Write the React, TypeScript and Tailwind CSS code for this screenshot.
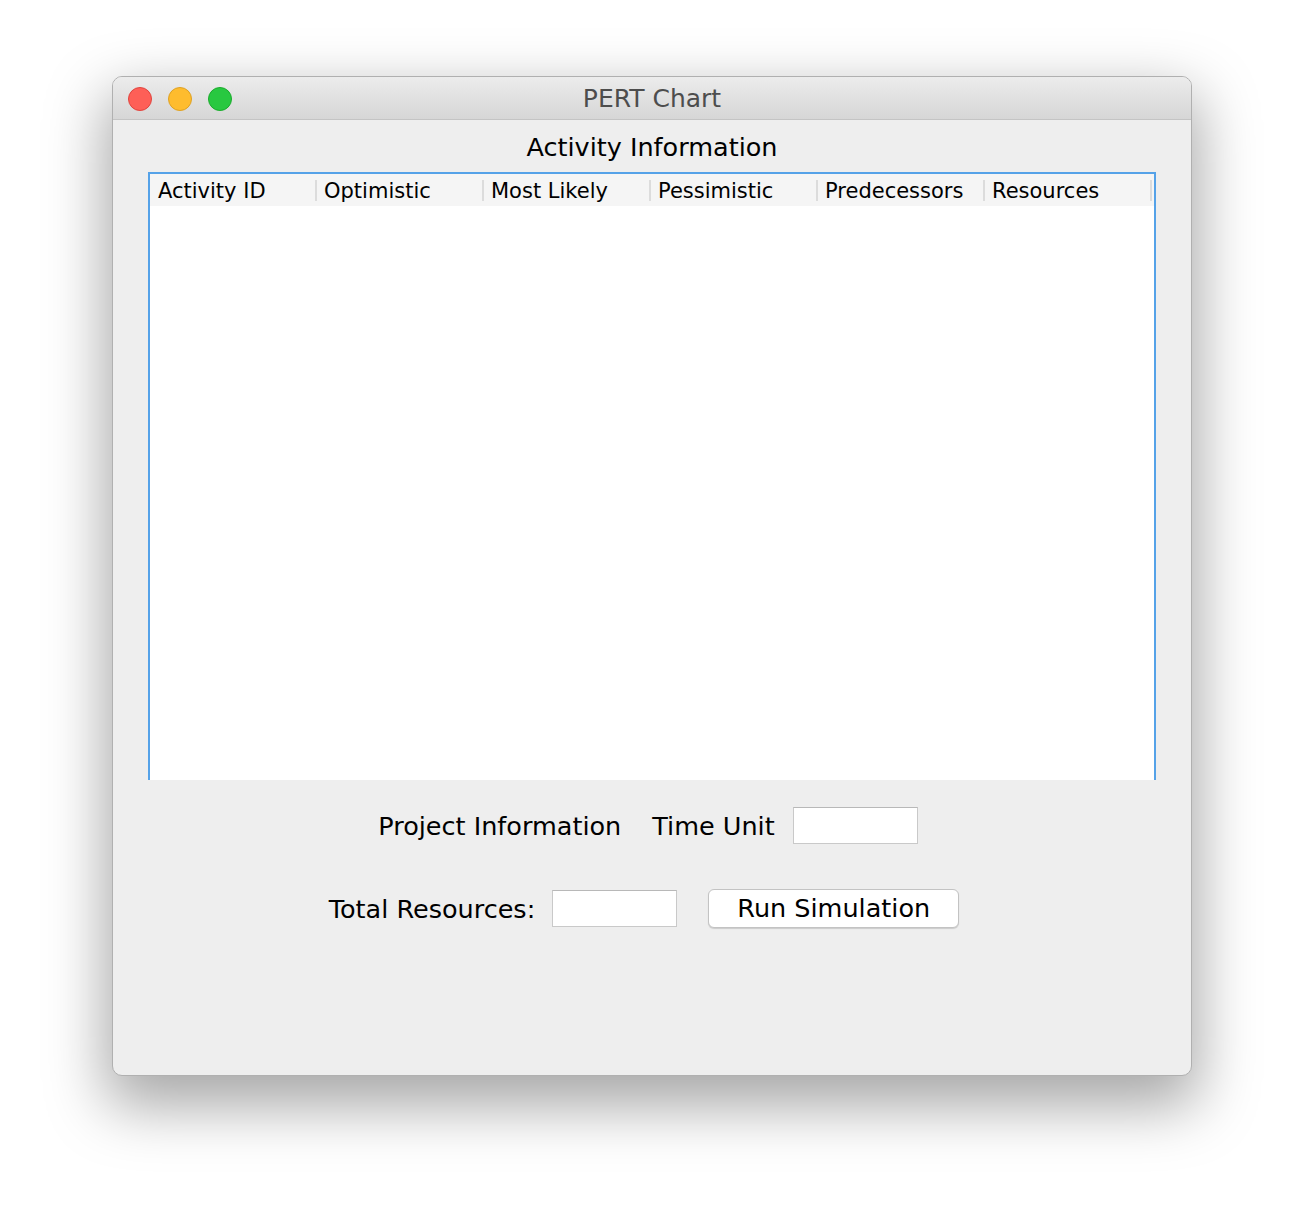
const columns = ['Activity ID', 'Optimistic', 'Most Likely', 'Pessimistic', 'Predecessors', 'Resources'];

const TrafficLights = () => (
  <div className="absolute left-[15px] top-[10px] flex gap-[16px]">
    <span className="h-[24px] w-[24px] rounded-full border border-[#e0443e] bg-[#fe5f57]" />
    <span className="h-[24px] w-[24px] rounded-full border border-[#dea123] bg-[#febc2e]" />
    <span className="h-[24px] w-[24px] rounded-full border border-[#1aac2c] bg-[#28c840]" />
  </div>
);

const Field = () => <div className="h-[37px] w-[125px] border border-[#c9c9c9] border-t-[#b8b8b8] bg-white" />;

const App = () => {
  return (
    <div className="min-h-[1224px] bg-white pt-[76px] font-['DejaVu_Sans',sans-serif]">
      <div className="mx-auto h-[1000px] w-[1080px] overflow-hidden rounded-[10px] border border-[#b0b0b0] bg-[#eeeeee] shadow-[0_24px_60px_6px_rgba(0,0,0,0.35)]">
        <div className="relative flex h-[43px] items-center justify-center border-b border-[#c4c4c4] bg-gradient-to-b from-[#ececec] to-[#d6d6d6]">
          <TrafficLights />
          <span className="text-[25px] leading-none text-[#4d4d4d]">PERT Chart</span>
        </div>

        <div className="flex h-[52px] items-center justify-center pt-[3px]">
          <h1 className="text-[25.5px] leading-none text-black">Activity Information</h1>
        </div>

        <div className="mx-[35px] h-[608px] border-x-2 border-t-2 border-[#55a2e8] bg-white">
          <div className="grid h-[32px] grid-cols-6 bg-[#f5f5f5] pr-[2px]">
            {columns.map((col, i) => (
              <div key={col} className="relative flex items-center pt-[2px]">
                <span className={`text-[21px] leading-none text-black ${i === 0 ? 'pl-[8px]' : 'pl-[7px]'}`}>{col}</span>
                <span className="absolute right-0 top-[6px] h-[21px] w-[2px] bg-[#dcdcdc]" />
              </div>
            ))}
          </div>
        </div>

        <div className="mt-[27px] flex items-center justify-center pr-[8px]">
          <span className="pt-[3px] text-[25.5px] leading-none text-black">Project Information</span>
          <span className="ml-[31px] pt-[3px] text-[25.5px] leading-none text-black">Time Unit</span>
          <div className="ml-[18px]">
            <Field />
          </div>
        </div>

        <div className="mt-[45px] flex items-center justify-center pr-[16px]">
          <span className="pt-[3px] text-[25.5px] leading-none text-black">Total Resources:</span>
          <div className="ml-[17px]">
            <Field />
          </div>
          <button className="ml-[31px] flex h-[39px] w-[251px] items-center justify-center rounded-[6px] border border-[#c3c3c3] bg-white pt-[1px] text-[25.5px] leading-none text-black shadow-[0_1px_1px_rgba(0,0,0,0.15)]">
            Run Simulation
          </button>
        </div>
      </div>
    </div>
  );
};

export default App;
